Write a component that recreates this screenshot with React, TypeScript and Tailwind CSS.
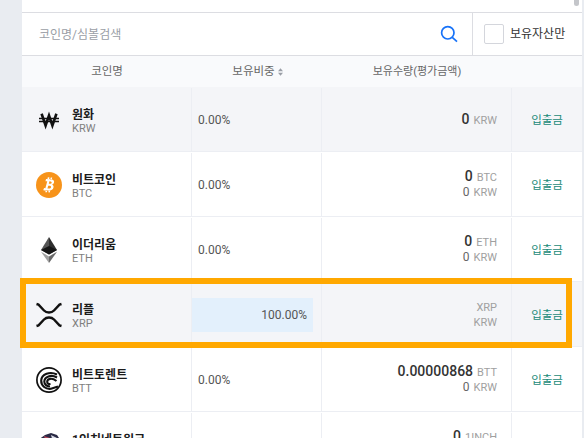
import React from "react";

const font = { fontFamily: '"Roboto","Noto Sans CJK KR",sans-serif' };

function Won() {
  return (
    <svg width="26" height="26" viewBox="0 0 26 26" fill="none" stroke="#111">
      <path d="M6 8 L9.6 18.4 L13 8.5 L16.4 18.4 L20 8" strokeWidth="2.6" strokeLinecap="square" />
      <path d="M3 11.5H23M3 14.5H23" strokeWidth="1.4" />
    </svg>
  );
}
function Btc() {
  return (
    <svg width="26" height="26" viewBox="0 0 26 26">
      <circle cx="13" cy="13" r="13" fill="#f7931a" />
      <path
        d="M9.6 7.2 L14.6 7.2 C17.4 7.2 18.2 9 17.8 10.4 C17.5 11.6 16.6 12.2 15.8 12.4 C17.2 12.8 18 13.9 17.6 15.5 C17.2 17.4 15.6 18.6 13.2 18.6 L7.6 18.6 L8.3 16.4 L9.6 16.4 L11 9.4 L9.2 9.4 Z M13.2 9.3 L12.7 11.7 L14.2 11.7 C15.8 11.7 16 9.3 14.5 9.3 Z M12.3 13.7 L11.7 16.5 L13.6 16.5 C15.5 16.5 15.8 13.7 14 13.7 Z M11.3 5.4 L13 5.4 L12.6 7.6 L11 7.6 Z M14.2 5.4 L15.7 5.4 L15.3 7.6 L13.8 7.6 Z M10.2 18.2 L11.8 18.2 L11.4 20.4 L9.8 20.4 Z M13.2 18.2 L14.7 18.2 L14.3 20.4 L12.8 20.4 Z"
        fill="#fff"
        fillRule="evenodd"
        transform="rotate(4 13 13)"
      />
    </svg>
  );
}
function Eth() {
  return (
    <svg width="26" height="26" viewBox="0 0 26 26">
      <path d="M13 0 L5 13 L13 17.5Z" fill="#555" />
      <path d="M13 0 L21 13 L13 17.5Z" fill="#2f2f2f" />
      <path d="M5 14.8 L13 26 L13 19.4Z" fill="#a0a0a0" />
      <path d="M21 14.8 L13 26 L13 19.4Z" fill="#6a6a6a" />
      <path d="M13 9 L5 13 L13 17.5 L21 13Z" fill="#161616" />
    </svg>
  );
}
function Xrp() {
  return (
    <svg width="26" height="26" viewBox="0 0 26 26" fill="none" stroke="#111" strokeWidth="2.4">
      <path d="M0.5 2 L2.5 2.6 L8 8.5 C10.5 11.2 15.5 11.2 18 8.5 L23.5 2.6 L25.5 2" />
      <path d="M0.5 24 L2.5 23.4 L8 17.5 C10.5 14.8 15.5 14.8 18 17.5 L23.5 23.4 L25.5 24" />
    </svg>
  );
}
function Btt() {
  return (
    <svg width="26" height="26" viewBox="0 0 26 26" fill="none">
      <circle cx="13" cy="13" r="12.1" stroke="#111" strokeWidth="1.7" />
      <path d="M21 7.5 C14 4 5.5 7 5.2 13.5 C5 19 10 22.5 15 21.8 L22 19.5" stroke="#111" strokeWidth="2.1" />
      <path d="M21 10.5 C15 7.2 8.5 9.5 8.3 14.5 C8.2 17.5 11 19.7 14 19.2" stroke="#111" strokeWidth="2.1" />
      <path d="M20.5 14 C16 10.5 11.3 11.5 11.2 14.8 C11.1 16.5 12.5 17.3 14.5 17" stroke="#111" strokeWidth="2.1" />
    </svg>
  );
}
function Inch() {
  return (
    <svg width="26" height="26" viewBox="0 0 26 26">
      <path d="M2 8 L9 3 L15 1 L21 3 L25 9 L25 26 L2 26Z" fill="#2a2a45" />
      <path d="M8 4 L14 6 L10 10Z" fill="#b4485a" />
      <path d="M15 3 L21 6 L17 10Z" fill="#d9dbe6" />
    </svg>
  );
}

type Row = {
  icon: React.ReactNode;
  name: string;
  sym: string;
  pct: string;
  amt: string;
  krw: string | null;
  tint?: boolean;
  hl?: boolean;
};

const rows: Row[] = [
  { icon: <Won />, name: "원화", sym: "KRW", pct: "0.00%", amt: "0", krw: null, tint: true },
  { icon: <Btc />, name: "비트코인", sym: "BTC", pct: "0.00%", amt: "0", krw: "0" },
  { icon: <Eth />, name: "이더리움", sym: "ETH", pct: "0.00%", amt: "0", krw: "0" },
  { icon: <Xrp />, name: "리플", sym: "XRP", pct: "100.00%", amt: "", krw: "", tint: true, hl: true },
  { icon: <Btt />, name: "비트토렌트", sym: "BTT", pct: "0.00%", amt: "0.00000868", krw: "0" },
  { icon: <Inch />, name: "1인치네트워크", sym: "1INCH", pct: "0.00%", amt: "0", krw: "0" },
];

function CoinRow({ r }: { r: Row }) {
  return (
    <div className={`flex h-[65px] shrink-0 border-b border-[#eceef3] pt-[1px] ${r.tint ? "bg-[#f4f5f8]" : "bg-white"}`}>
      <div className="flex w-[170px] shrink-0 items-center border-r border-[#eceef3] pl-[14px]">
        <div className="flex h-[26px] w-[26px] items-center justify-center">{r.icon}</div>
        <div className="ml-[10px] mt-[4px]">
          <div className="text-[12px] leading-[14px] font-bold text-[#1b1b1b]">{r.name}</div>
          <div className="text-[11px] leading-[14px] text-[#7f7f7f]">{r.sym}</div>
        </div>
      </div>
      <div className="flex w-[130px] shrink-0 items-center border-r border-[#eceef3]">
        {r.hl ? (
          <div className="flex h-[34px] w-[121px] items-center justify-end bg-[#e3f0fc] pr-[6px] text-[12px] text-[#555]">{r.pct}</div>
        ) : (
          <div className="pl-[6px] text-[12px] text-[#555]">{r.pct}</div>
        )}
      </div>
      <div className="flex w-[190px] shrink-0 flex-col items-end justify-center border-r border-[#eceef3] pr-[14px]">
        <div className="flex items-baseline leading-[15px]">
          <span className="text-[14px] font-medium text-[#333]">{r.amt}</span>
          <span className="ml-[4px] text-[11px] text-[#a0a0a0]">{r.sym}</span>
        </div>
        {r.krw !== null && (
          <div className="flex items-baseline leading-[15px]">
            <span className="text-[12px] text-[#666]">{r.krw}</span>
            <span className="ml-[4px] text-[11px] text-[#a0a0a0]">KRW</span>
          </div>
        )}
      </div>
      <div className="flex flex-1 items-center justify-center pt-[2px] text-[11.5px] text-[#1a8a78]">입출금</div>
    </div>
  );
}

export default function App() {
  return (
    <div className="relative flex h-[438px] w-[584px] overflow-hidden bg-[#e9ecf1]" style={font}>
      <div className="ml-[22px] flex h-full w-[560px] flex-col overflow-hidden bg-white">
        <div className="relative h-[12px] shrink-0">
          <div className="absolute right-[3px] top-[-4px] h-[10px] w-[5px] rounded-[3px] bg-[#c4c6ca]" />
        </div>
        <div className="flex h-[44px] shrink-0 items-center border-y border-[#dcdde2]">
          <div className="flex-1 pl-[17px] pt-[1px] text-[12px] text-[#9a9ea6]">코인명/심볼검색</div>
          <svg className="mr-[14px]" width="18" height="18" viewBox="0 0 18 18" fill="none" stroke="#1772f8" strokeWidth="1.7">
            <circle cx="7.8" cy="7.8" r="6.2" />
            <path d="M12.3 12.3 L17 16.6" />
          </svg>
          <div className="flex h-full w-[110px] items-center border-l border-[#dcdde2] pl-[11px]">
            <div className="h-[20px] w-[20px] rounded-[2px] border border-[#d4d6dc] bg-white" />
            <span className="ml-[6px] text-[12px] text-[#333]">보유자산만</span>
          </div>
        </div>
        <div className="flex h-[31px] shrink-0 items-center bg-[#f9fafc] pt-[1px] text-[11.5px] text-[#666]">
          <div className="w-[170px] text-center">코인명</div>
          <div className="flex w-[130px] items-center justify-center pl-[1px]">
            보유비중
            <svg className="ml-[3px]" width="5" height="8" viewBox="0 0 6 9" fill="#9a9ea6">
              <path d="M3 0 L6 3.5 H0Z M3 9 L0 5.5 H6Z" />
            </svg>
          </div>
          <div className="w-[190px] text-center text-[11px]">보유수량(평가금액)</div>
        </div>
        {rows.map((r) => (
          <CoinRow key={r.sym} r={r} />
        ))}
      </div>
      <div className="absolute left-[20px] top-[278px] h-[70px] w-[552px] border-[6px] border-[#ffa800]" />
    </div>
  );
}
